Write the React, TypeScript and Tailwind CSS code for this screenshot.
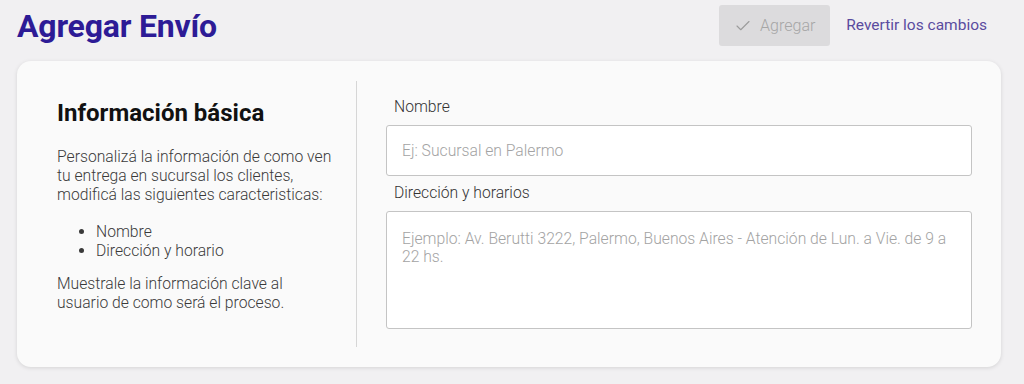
import { Check } from 'lucide-react';

const App = () => {
  return (
    <div
      className="w-[1024px] h-[384px] bg-[#f1f0f2] px-[17px] overflow-hidden"
      style={{ fontFamily: 'Roboto, "Noto Sans", sans-serif' }}
    >
      <header className="h-[61px] flex items-start justify-between">
        <h1 className="mt-[6px] text-[32px] leading-[40px] font-bold text-[#2d1b96] tracking-[-0.2px]">
          Agregar Envío
        </h1>
        <div className="flex items-center mt-[5px] mr-[20px]">
          <button
            disabled
            className="h-[41px] w-[111px] rounded-[3px] bg-[#dcdbdd] text-[#a6a6a6] text-[16px] font-light flex items-center justify-center gap-[8px] pt-[1px]"
          >
            <Check size={18} strokeWidth={1.5} className="text-[#9c9c9c]" />
            Agregar
          </button>
          <a href="#" className="ml-[16px] pt-[1px] text-[15.5px] text-[#5a4b9f] font-normal">
            Revertir los cambios
          </a>
        </div>
      </header>

      <section className="w-[984px] h-[306px] bg-[#fafafa] rounded-[14px] shadow-[0_1px_4px_rgba(0,0,0,0.12)] flex py-[20px]">
        <div className="w-[340px] shrink-0 border-r border-[#d6d6d6] pl-[40px] pr-[20px] pt-[18px] text-[15.7px] leading-[19px] font-light text-[#3a3a3a]">
          <h2 className="text-[24px] leading-[28px] font-bold text-[#111] mb-[20px]">
            Información básica
          </h2>
          <p>
            Personalizá la información de como ven tu entrega en sucursal los clientes, modificá las siguientes caracteristicas:
          </p>
          <ul className="list-disc pl-[39px] mt-[18px] mb-[14px]">
            <li>Nombre</li>
            <li>Dirección y horario</li>
          </ul>
          <p>Muestrale la información clave al usuario de como será el proceso.</p>
        </div>

        <div className="flex-1 px-[29px] font-light text-[15.7px] text-[#333]">
          <label className="block pl-[8px] pt-[16px] leading-[20px] mb-[8px]">Nombre</label>
          <input
            placeholder="Ej: Sucursal en Palermo"
            className="w-full h-[51px] bg-white border border-[#c4c4c4] rounded-[3px] px-[15px] text-[15.7px] font-light placeholder:text-[#a3a3a3] outline-none"
          />
          <label className="block pl-[8px] pt-[7px] leading-[20px] mb-[8px]">Dirección y horarios</label>
          <textarea
            placeholder="Ejemplo: Av. Berutti 3222, Palermo, Buenos Aires - Atención de Lun. a Vie. de 9 a 22 hs."
            className="w-full h-[118px] bg-white border border-[#c4c4c4] rounded-[3px] pl-[15px] pr-[8px] pt-[18px] text-[15.7px] leading-[18px] font-light placeholder:text-[#a3a3a3] outline-none resize-none"
          />
        </div>
      </section>
    </div>
  );
};

export default App;
